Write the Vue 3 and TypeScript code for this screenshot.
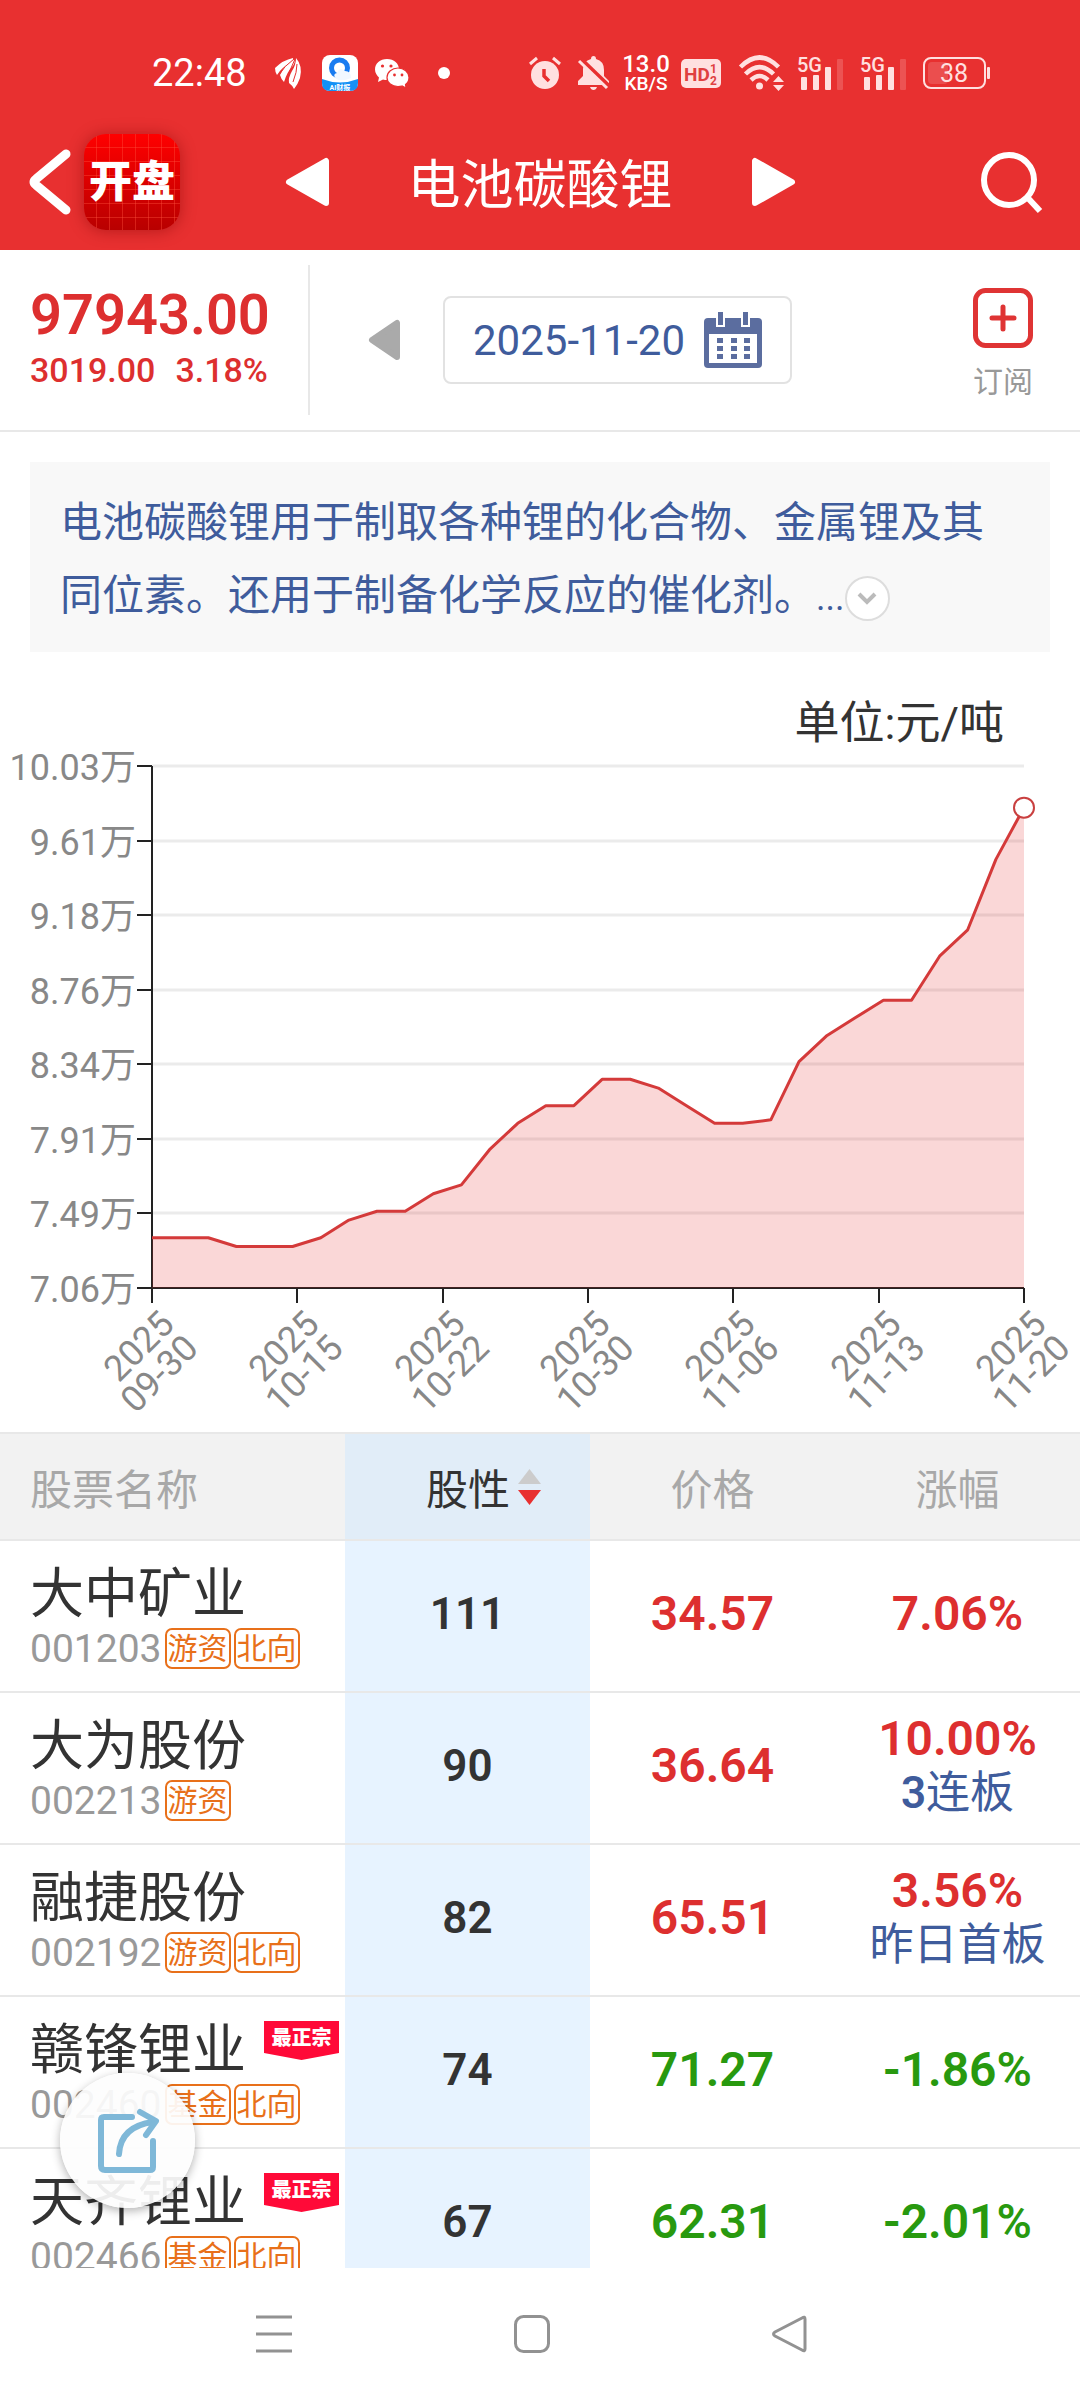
<script setup lang="ts">
import { computed, ref } from 'vue'

interface Stock {
  name: string
  code: string
  tags: string[]
  best?: boolean
  score: number
  price: string
  change: string
  streak?: number
  note?: string
}

const stocks: Stock[] = [
  { name: '大中矿业', code: '001203', tags: ['游资', '北向'], score: 111, price: '34.57', change: '7.06%' },
  { name: '大为股份', code: '002213', tags: ['游资'], score: 90, price: '36.64', change: '10.00%', streak: 3, note: '连板' },
  { name: '融捷股份', code: '002192', tags: ['游资', '北向'], score: 82, price: '65.51', change: '3.56%', note: '昨日首板' },
  { name: '赣锋锂业', code: '002460', tags: ['基金', '北向'], best: true, score: 74, price: '71.27', change: '-1.86%' },
  { name: '天齐锂业', code: '002466', tags: ['基金', '北向'], best: true, score: 67, price: '62.31', change: '-2.01%' },
]

// Prices in units of ten thousand yuan per tonne, one entry per trading day.
const prices: number[] = [
  7.35, 7.35, 7.35, 7.3, 7.3, 7.3, 7.35, 7.45, 7.5, 7.5, 7.6, 7.65, 7.85, 8, 8.1, 8.1,
  8.25, 8.25, 8.2, 8.1, 8, 8, 8.02, 8.35, 8.5, 8.6, 8.7, 8.7, 8.95, 9.1, 9.5, 9.7943,
]
const yLabels = ['10.03万', '9.61万', '9.18万', '8.76万', '8.34万', '7.91万', '7.49万', '7.06万']
const xLabels = ['09-30', '10-15', '10-22', '10-30', '11-06', '11-13', '11-20']

const plot = { left: 152, right: 1024, top: 14, bottom: 536, min: 7.064, max: 10.031 }

const yTicks = computed(() =>
  yLabels.map((label, i) => ({
    label,
    y: Math.round(plot.top + ((plot.bottom - plot.top) * i) / (yLabels.length - 1)),
  })),
)
const xTicks = computed(() =>
  xLabels.map((label, i) => ({
    label,
    x: Math.round(plot.left + ((plot.right - plot.left) * i) / (xLabels.length - 1)),
  })),
)
const points = computed(() =>
  prices.map((v, i) => ({
    x: plot.left + ((plot.right - plot.left) * i) / (prices.length - 1),
    y: plot.bottom - ((plot.bottom - plot.top) * (v - plot.min)) / (plot.max - plot.min),
  })),
)
const linePoints = computed(() => points.value.map((p) => `${p.x.toFixed(1)},${p.y.toFixed(1)}`).join(' '))
const areaPoints = computed(
  () => `${plot.left},${plot.bottom} ${linePoints.value} ${plot.right},${plot.bottom}`,
)
const lastPoint = computed(() => points.value[points.value.length - 1])

const date = ref('2025-11-20')
</script>

<template>
  <div class="page">
    <header class="top">
      <div class="status">
        <div class="status-left">
          <span class="clock">22:48</span>
          <svg class="i-bird" width="26" height="31" viewBox="0 0 26 31" fill="#fff" aria-hidden="true">
            <path d="M0 10Q8 2 18 0Q19 3 14 6Q7 9 2 17Q0 14 0 10Z" />
            <path d="M19 1Q21 4 17 9Q12 14 9 24Q6 21 5 17Q9 7 19 1Z" />
            <path d="M21 0Q28 8 25 20Q23 26 19 31Q18 28 14 25Q13 20 17 13Q21 7 21 0Z" />
            <path d="M4 17Q9 8 19 1M11 25Q14 13 20 1M18 24Q22 14 22 6" fill="none" stroke="#e83030" stroke-width="1" />
          </svg>
          <svg class="i-browser" width="36" height="36" viewBox="0 0 36 36" aria-hidden="true">
            <rect width="36" height="36" rx="8" fill="#fff" />
            <path d="M0 24Q18 31 36 24V28Q36 36 28 36H8Q0 36 0 28Z" fill="#1490f5" />
            <circle cx="17.500" cy="13" r="8" fill="none" stroke="#1a7cf0" stroke-width="5" />
            <path d="M14 24Q10 19 15 18Q18 11 23 16Q29 16 29 23Q20 27 14 24Z" fill="#f2f8ff" />
            <text x="18" y="35" text-anchor="middle" font-size="7" font-weight="700" fill="#fff">AI财报</text>
          </svg>
          <svg class="i-wechat" width="34" height="30" viewBox="0 0 34 30" aria-hidden="true">
            <path d="M12 1C5 1 0 5.500 0 11.500C0 15 2 17.500 4 19.500L3 24L8 21.500Q10 22 12 22C19 22 24 17 24 11.500C24 5.500 19 1 12 1Z" fill="#fff" />
            <circle cx="7.500" cy="8" r="1.600" fill="#e83030" /><circle cx="16" cy="8" r="1.600" fill="#e83030" />
            <path d="M23 10C17 10 12 14 12 19.500C12 25 17 28.500 23 28.500Q25 28.500 27 28L31 30L30.500 26.500C32.500 25 34 22.500 34 19.500C34 14 29 10 23 10Z" fill="#fff" stroke="#e83030" stroke-width="1.200" />
            <circle cx="19.500" cy="17" r="1.400" fill="#e83030" /><circle cx="27" cy="17" r="1.400" fill="#e83030" />
          </svg>
          <span class="dot"></span>
        </div>
        <div class="status-right">
          <svg class="i-alarm" width="32" height="34" viewBox="0 0 32 34" aria-hidden="true">
            <circle cx="16" cy="19" r="14" fill="#ffe0e0" />
            <path d="M1 8L8 2M31 8L24 2" stroke="#ffe0e0" stroke-width="3" />
            <path d="M15 13V20L20 25" fill="none" stroke="#e83030" stroke-width="3.500" />
          </svg>
          <svg class="i-bell" width="31" height="34" viewBox="0 0 31 34" aria-hidden="true">
            <path d="M15.500 0Q18 0 18 3Q26 5 26 14V20L31 25V29H0V25L5 20V13Q5 5 13 3Q13 0 15.500 0ZM12 31H19Q18 34 15.500 34Q13 34 12 31Z" fill="#ffe0e0" />
            <path d="M3 3L32 31" stroke="#e83030" stroke-width="4" />
            <path d="M1 5L29 32" stroke="#ffe0e0" stroke-width="3" />
          </svg>
          <span class="speed"><b>13.0</b><small>KB/S</small></span>
          <svg class="i-hd" width="40" height="29" viewBox="0 0 40 29" aria-hidden="true">
            <rect width="40" height="29" rx="5" fill="#ffe0e0" />
            <text x="3" y="22" font-size="19" font-weight="700" fill="#e04040">HD</text>
            <text x="29" y="14" font-size="12" font-weight="700" fill="#e04040">1</text>
            <text x="29" y="26" font-size="12" font-weight="700" fill="#e04040">2</text>
          </svg>
          <svg class="i-wifi" width="45" height="36" viewBox="0 0 45 36" aria-hidden="true">
            <g fill="none" stroke="#ffe0e0" stroke-width="4.500">
              <path d="M1.500 12Q20.500 -7 39.500 12" />
              <path d="M6.500 19Q20.500 5 34.500 19" />
              <path d="M12 25Q20.500 17 29 25" />
            </g>
            <circle cx="20.500" cy="31" r="3.500" fill="#ffe0e0" />
            <path d="M34 27L39.500 21L45 27ZM34 30L39.500 36L45 30Z" fill="#ffe0e0" />
          </svg>
          <svg v-for="n in 2" :key="n" class="i-signal" width="47" height="34" viewBox="0 0 47 34" aria-hidden="true">
            <text x="0" y="16" font-size="20" font-weight="500" fill="#ffe0e0">5G</text>
            <g fill="#ffe0e0">
              <rect x="4" y="21" width="6" height="13" rx="1" />
              <rect x="16" y="19" width="6" height="15" rx="1" />
              <rect x="28" y="11" width="6" height="23" rx="1" />
              <rect x="40" y="3" width="6" height="31" rx="1" opacity=".2" />
            </g>
          </svg>
          <svg class="i-battery" width="67" height="32" viewBox="0 0 67 32" aria-hidden="true">
            <rect x="1" y="1" width="61" height="30" rx="7" fill="none" stroke="#ffe0e0" stroke-width="2" />
            <rect x="5" y="5" width="20" height="22" rx="4" fill="#fff" opacity=".15" />
            <rect x="64" y="10" width="3" height="12" rx="1" fill="#ffe0e0" />
            <text x="31" y="25" text-anchor="middle" font-size="25" fill="#ffe0e0">38</text>
          </svg>
        </div>
      </div>

      <div class="bar">
        <div class="bar-side">
          <button class="plain" aria-label="返回">
            <svg width="44" height="66" viewBox="0 0 44 66"><path d="M38 5L8 30Q4 33 8 36L38 61" fill="none" stroke="#fff" stroke-width="9" stroke-linecap="round" stroke-linejoin="round" /></svg>
          </button>
          <span class="logo">开盘</span>
        </div>
        <div class="bar-center">
          <button class="plain" aria-label="上一个">
            <svg width="46" height="52" viewBox="0 0 46 52"><path d="M42 5V47L5 26Z" fill="#fff" stroke="#fff" stroke-width="6" stroke-linejoin="round" /></svg>
          </button>
          <h1>电池碳酸锂</h1>
          <button class="plain" aria-label="下一个">
            <svg width="46" height="52" viewBox="0 0 46 52"><path d="M4 5V47L41 26Z" fill="#fff" stroke="#fff" stroke-width="6" stroke-linejoin="round" /></svg>
          </button>
        </div>
        <div class="bar-side end">
          <button class="plain search" aria-label="搜索">
            <svg width="64" height="64" viewBox="0 0 64 64" fill="none" stroke="#fff"><circle cx="29" cy="30" r="25" stroke-width="6" /><path d="M47 47L60 61" stroke-width="6" /></svg>
          </button>
        </div>
      </div>
    </header>

    <main class="content">
      <section class="quote">
        <div class="figures">
          <strong>97943.00</strong>
          <div class="delta"><span>3019.00</span><span>3.18%</span></div>
        </div>
        <div class="picker">
          <button class="plain" aria-label="前一天">
            <svg width="32" height="42" viewBox="0 0 32 42"><path d="M29 4V38L4 21Z" fill="#aaa" stroke="#aaa" stroke-width="6" stroke-linejoin="round" /></svg>
          </button>
          <button class="date">
            <span>{{ date }}</span>
            <svg width="58" height="56" viewBox="0 0 58 56" aria-hidden="true">
              <rect y="6" width="58" height="50" rx="4" fill="#5b6d9f" />
              <rect x="5" y="22" width="48" height="29" fill="#fff" />
              <path d="M12 0H21V15H12ZM37 0H46V15H37Z" fill="#fff" />
              <path d="M14 0H19V13H14ZM39 0H44V13H39Z" fill="#5b6d9f" />
              <path d="M13 26h6v5h-6zM27 26h6v5h-6zM40 26h6v5h-6zM13 34h6v5h-6zM27 34h6v5h-6zM40 34h6v5h-6zM13 42h6v5h-6zM27 42h6v5h-6zM40 42h6v5h-6z" fill="#5b6d9f" />
            </svg>
          </button>
        </div>
        <button class="plain subscribe">
          <svg width="60" height="60" viewBox="0 0 60 60" fill="none" stroke="#df3434" aria-hidden="true">
            <rect x="2.500" y="2.500" width="55" height="55" rx="10" stroke-width="5" />
            <path d="M30 19V41M19 30H41" stroke-width="5" stroke-linecap="round" />
          </svg>
          <span>订阅</span>
        </button>
      </section>

      <section class="intro">
        <p>电池碳酸锂用于制取各种锂的化合物、金属锂及其同位素。还用于制备化学反应的催化剂。<span class="dots">...</span><button class="expand" aria-label="展开">
            <svg width="20" height="14" viewBox="0 0 20 14"><path d="M2 2L10 10L18 2" fill="none" stroke="#bbb" stroke-width="4" /></svg>
          </button></p>
      </section>

      <section class="trend">
        <div class="unit">单位:元/吨</div>
        <svg class="chart" viewBox="0 0 1080 680" role="img" aria-label="价格走势">
          <g stroke="#ebebeb" stroke-width="3">
            <line v-for="t in yTicks.slice(0, -1)" :key="t.label" :x1="plot.left" :x2="plot.right" :y1="t.y" :y2="t.y" />
          </g>
          <g stroke="#222" stroke-width="2">
            <line :x1="plot.left" :x2="plot.left" :y1="plot.top" :y2="plot.bottom" />
            <line :x1="plot.left" :x2="plot.right" :y1="plot.bottom" :y2="plot.bottom" />
            <line v-for="t in yTicks" :key="t.label" x1="137" :x2="plot.left" :y1="t.y" :y2="t.y" />
            <line v-for="t in xTicks" :key="t.label" :x1="t.x" :x2="t.x" :y1="plot.bottom" y2="551" />
          </g>
          <polygon :points="areaPoints" fill="#e52020" fill-opacity=".18" />
          <polyline :points="linePoints" fill="none" stroke="#d43a3a" stroke-width="3" stroke-linejoin="round" />
          <circle :cx="lastPoint.x" :cy="lastPoint.y" r="10" fill="#fff" stroke="#c94040" stroke-width="2" />
          <g text-anchor="end">
            <text v-for="t in yTicks" :key="t.label" class="axis-text" x="136" :y="t.y + 14">{{ t.label }}</text>
            <g v-for="t in xTicks" :key="t.label" class="axis-text" :transform="`translate(${t.x} ${plot.bottom}) rotate(-45)`">
              <text x="-10" y="44">2025</text>
              <text x="-10" y="78">{{ t.label }}</text>
            </g>
          </g>
        </svg>
      </section>

      <table class="stocks">
        <colgroup><col class="c-name" /><col class="c-num" /><col class="c-num" /><col class="c-num" /></colgroup>
        <thead>
          <tr>
            <th class="left">股票名称</th>
            <th class="score">
              <button class="plain sort">
                股性
                <svg width="23" height="36" viewBox="0 0 23 36" aria-hidden="true"><path d="M0 15L11.500 0L23 15Z" fill="#ccc" /><path d="M0 21L11.500 36L23 21Z" fill="#e83030" /></svg>
              </button>
            </th>
            <th>价格</th>
            <th>涨幅</th>
          </tr>
        </thead>
        <tbody>
          <tr v-for="s in stocks" :key="s.code">
            <td class="left">
              <div class="name">{{ s.name }}<span v-if="s.best" class="badge">最正宗</span></div>
              <div class="meta">
                <span class="code">{{ s.code }}</span>
                <span v-for="t in s.tags" :key="t" class="tag">{{ t }}</span>
              </div>
            </td>
            <td class="score">{{ s.score }}</td>
            <td class="num" :class="{ down: s.change.startsWith('-') }">{{ s.price }}</td>
            <td class="num" :class="{ down: s.change.startsWith('-') }">
              {{ s.change }}
              <div v-if="s.note" class="note"><b v-if="s.streak">{{ s.streak }}</b>{{ s.note }}</div>
            </td>
          </tr>
        </tbody>
      </table>
    </main>

    <footer class="nav">
      <button class="share" aria-label="分享">
        <svg width="62" height="66" viewBox="0 0 62 66" fill="none" stroke="#7fb8d8" stroke-width="6" stroke-linecap="round" stroke-linejoin="round">
          <path d="M35 9H7Q4 9 4 12V58Q4 62 8 62H53Q56 62 56 59V33" />
          <path d="M22 46C23 28 34 17 56 14" />
          <path d="M43 4L59 13L49 27" />
        </svg>
      </button>
      <button class="plain" aria-label="菜单">
        <svg width="36" height="38" viewBox="0 0 36 38"><path d="M0 2H36M0 19H36M0 36H36" stroke="#929292" stroke-width="3" /></svg>
      </button>
      <button class="plain" aria-label="主页">
        <svg width="36" height="38" viewBox="0 0 36 38"><rect x="1.500" y="1.500" width="33" height="35" rx="8" fill="none" stroke="#929292" stroke-width="3" /></svg>
      </button>
      <button class="plain" aria-label="后退">
        <svg width="36" height="38" viewBox="0 0 36 38"><path d="M33 4V34Q33 37 30 35L3 21Q0 19 3 17L30 3Q33 1 33 4Z" fill="none" stroke="#929292" stroke-width="3" /></svg>
      </button>
    </footer>
  </div>
</template>

<style>
body {
  background: #fff;
}
</style>

<style scoped>
* {
  box-sizing: border-box;
}
.page {
  display: flex;
  flex-direction: column;
  height: 100vh;
  background: #fff;
  color: #333;
  font-family: Roboto, "Noto Sans CJK SC", sans-serif;
}
svg {
  display: block;
  flex: none;
  overflow: visible;
}
button {
  font: inherit;
  color: inherit;
}
.plain {
  padding: 0;
  border: 0;
  background: none;
}
.top {
  flex: none;
  background: #e83030;
  color: #fff;
  padding-top: 48px;
}
.status {
  display: flex;
  justify-content: space-between;
  align-items: center;
  height: 50px;
  padding: 0 90px 0 152px;
}
.status-left,
.status-right {
  display: flex;
  align-items: center;
}
.clock {
  font-size: 38px;
  line-height: 50px;
}
.i-bird {
  margin-left: 28px;
}
.i-browser {
  margin-left: 21px;
}
.i-wechat {
  margin-left: 17px;
}
.dot {
  width: 12px;
  height: 12px;
  margin-left: 29px;
  border-radius: 50%;
  background: #fff;
}
.i-bell {
  margin-left: 17px;
}
.speed {
  display: flex;
  flex-direction: column;
  align-items: center;
  width: 46px;
  margin-left: 14px;
}
.speed b {
  font-size: 24px;
  font-weight: 500;
  line-height: 21px;
}
.speed small {
  font-size: 19px;
  font-weight: 500;
  line-height: 18px;
}
.i-hd {
  margin-left: 12px;
}
.i-wifi {
  margin-left: 18px;
}
.i-signal {
  margin-left: 13px;
}
.i-signal + .i-signal {
  margin-left: 16px;
}
.i-battery {
  margin-left: 16px;
}
.bar {
  display: flex;
  align-items: center;
  height: 152px;
  padding: 32px 28px 16px;
}
.bar-side {
  display: flex;
  flex: 1;
  align-items: center;
  gap: 12px;
}
.end {
  justify-content: flex-end;
}
.search {
  margin-right: 8px;
}
.bar-center {
  display: flex;
  align-items: center;
  gap: 78px;
}
h1 {
  margin: 0;
  padding-top: 8px;
  font-size: 53px;
  font-weight: 400;
  line-height: 64px;
}
.logo {
  width: 96px;
  height: 96px;
  border-radius: 22px;
  background:
    repeating-linear-gradient(90deg, transparent 0 12px, rgba(255, 80, 60, .4) 12px 13px),
    repeating-linear-gradient(transparent 0 13px, rgba(255, 80, 60, .4) 13px 14px),
    linear-gradient(#f00, #b80000);
  box-shadow: 0 1px 16px rgba(120, 0, 0, .45);
  font-size: 43px;
  font-weight: 900;
  line-height: 96px;
  text-align: center;
}
.content {
  flex: 1;
  min-height: 0;
  overflow: hidden;
}
.quote {
  display: flex;
  align-items: center;
  height: 182px;
  border-bottom: 2px solid #e8e8e8;
  padding-right: 47px;
}
.figures {
  width: 310px;
  height: 150px;
  padding: 20px 0 0 30px;
  border-right: 2px solid #e8e8e8;
  color: #dd2f2f;
}
.figures strong {
  display: block;
  font-size: 56px;
  font-weight: 600;
  line-height: 60px;
}
.delta {
  display: flex;
  gap: 20px;
  font-size: 34px;
  font-weight: 500;
  line-height: 50px;
}
.picker {
  display: flex;
  flex: 1;
  align-items: center;
  gap: 43px;
  padding-left: 58px;
}
.date {
  display: flex;
  align-items: center;
  justify-content: space-between;
  width: 349px;
  height: 88px;
  padding: 0 28px;
  border: 2px solid #e2e2e2;
  border-radius: 8px;
  background: #fff;
  color: #3f5c9c;
  font-size: 42px;
}
.subscribe {
  display: flex;
  flex-direction: column;
  align-items: center;
  gap: 14px;
  padding-top: 10px;
  color: #999;
  font-size: 30px;
  line-height: 40px;
}
.intro {
  margin: 30px 30px 0;
  padding: 24px 30px 20px;
  background: #f8f8f8;
  color: #3f5c9c;
  font-size: 42px;
  line-height: 73px;
}
.intro p {
  margin: 0;
}
.dots {
  font-size: 36px;
  line-height: 40px;
}
.expand {
  display: inline-flex;
  align-items: center;
  justify-content: center;
  width: 45px;
  height: 45px;
  padding: 0;
  border: 2px solid #ddd;
  border-radius: 50%;
  background: #fff;
  vertical-align: middle;
}
.unit {
  padding: 44px 76px 0 0;
  font-size: 45px;
  line-height: 56px;
  text-align: right;
}
.chart {
  width: 100%;
  height: auto;
}
.axis-text {
  fill: #888;
  font-size: 36px;
}
.stocks {
  width: 100%;
  border-collapse: separate;
  border-spacing: 0;
  border-top: 2px solid #e8e8e8;
  table-layout: fixed;
}
.c-name {
  width: 345px;
}
th,
td {
  padding: 0 0 4px;
  border-bottom: 2px solid #e8e8e8;
  text-align: center;
}
th {
  height: 107px;
  padding: 0;
  background: #f2f2f2;
  color: #a8a8a8;
  font-size: 42px;
  font-weight: 400;
}
td {
  height: 152px;
}
.left {
  padding: 0 0 0 30px;
  text-align: left;
}
td.left {
  padding-top: 5px;
}
th.score {
  background: #e1edf8;
  color: #333;
}
td.score {
  background: #e7f3ff;
  font-size: 44px;
  font-weight: 600;
}
.sort {
  display: inline-flex;
  align-items: center;
  gap: 8px;
  padding-left: 32px;
}
.name {
  display: flex;
  align-items: center;
  font-size: 54px;
  line-height: 60px;
}
.meta {
  display: flex;
  align-items: center;
  gap: 3px;
  height: 48px;
}
.code {
  color: #999;
  font-size: 39px;
}
.tag {
  width: 66px;
  height: 41px;
  border: 2px solid #e8701a;
  border-radius: 7px;
  color: #e8701a;
  font-size: 30px;
  line-height: 37px;
  text-align: center;
}
.badge {
  width: 75px;
  height: 39px;
  margin-left: 18px;
  margin-bottom: 20px;
  background: #ff0a38;
  clip-path: polygon(0 0, 100% 0, 100% 82%, 50% 100%, 0 82%);
  color: #fff;
  font-size: 20px;
  font-weight: 900;
  line-height: 35px;
  text-align: center;
}
.num {
  color: #dd2f2f;
  font-size: 48px;
  font-weight: 600;
  line-height: 54px;
}
.down {
  color: #28990f;
}
.note {
  color: #3f5c9c;
  font-size: 44px;
  font-weight: 400;
}
.note b {
  font-weight: 600;
}
.nav {
  position: relative;
  display: flex;
  flex: none;
  align-items: center;
  justify-content: center;
  gap: 222px;
  height: 132px;
  padding-right: 16px;
  background: #fff;
}
.share {
  position: absolute;
  left: 60px;
  bottom: 192px;
  display: flex;
  align-items: center;
  justify-content: center;
  width: 135px;
  height: 135px;
  padding: 0;
  border: 0;
  border-radius: 50%;
  background: rgba(253, 253, 253, .92);
  box-shadow: 0 3px 10px rgba(0, 0, 0, .3);
}
</style>
